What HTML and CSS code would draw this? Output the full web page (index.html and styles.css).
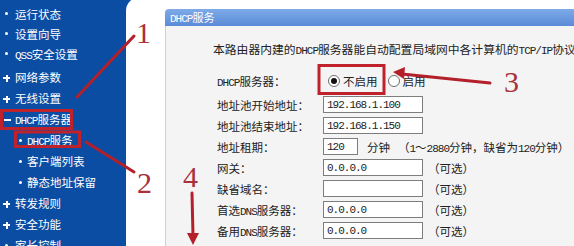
FILE: index.html
```html
<!DOCTYPE html>
<html lang="zh-CN">
<head>
    <meta charset="UTF-8">
    <title>DHCP服务</title>
    <link rel="stylesheet" href="styles.css">
</head>
<body>

    <div class="page">
        <!-- Menu kiri -->
        <nav class="sidebar">
            <ul class="menu">
                <li class="leaf">运行状态</li>
                <li class="leaf">设置向导</li>
                <li class="leaf"><span class="en">QSS</span>安全设置</li>
                <li class="plus group-start">网络参数</li>
                <li class="plus">无线设置</li>
                <li class="minus"><span class="en">DHCP</span>服务器</li>
                <li class="sub"><span class="en">DHCP</span>服务</li>
                <li class="sub">客户端列表</li>
                <li class="sub">静态地址保留</li>
                <li class="plus">转发规则</li>
                <li class="plus">安全功能</li>
                <li class="leaf">家长控制</li>
            </ul>
        </nav>

        <main class="main">
            <section class="panel">
                <div class="panel-head"><span class="en">DHCP</span>服务</div>
                <div class="panel-body">
                    <p class="intro">本路由器内建的<span class="en">DHCP</span>服务器能自动配置局域网中各计算机的<span class="en">TCP/IP</span>协议。</p>

                    <div class="form">
                        <div class="row row-radio">
                            <span class="label"><span class="en">DHCP</span>服务器：</span>
                            <span class="radio checked"></span><span class="radio-text">不启用</span>
                            <span class="radio radio-2"></span><span class="radio-text">启用</span>
                        </div>
                        <div class="row">
                            <span class="label">地址池开始地址：</span>
                            <input class="field" type="text" value="192.168.1.100" readonly>
                        </div>
                        <div class="row">
                            <span class="label">地址池结束地址：</span>
                            <input class="field" type="text" value="192.168.1.150" readonly>
                        </div>
                        <div class="row">
                            <span class="label">地址租期：</span>
                            <input class="field field-short" type="text" value="120" readonly>
                            <span class="unit">分钟</span>
                            <span class="hint">（<span class="en">1</span>～<span class="en">2880</span>分钟，缺省为<span class="en">120</span>分钟）</span>
                        </div>
                        <div class="row">
                            <span class="label">网关：</span>
                            <input class="field" type="text" value="0.0.0.0" readonly>
                            <span class="optional">（可选）</span>
                        </div>
                        <div class="row">
                            <span class="label">缺省域名：</span>
                            <input class="field" type="text" value="" readonly>
                            <span class="optional">（可选）</span>
                        </div>
                        <div class="row">
                            <span class="label">首选<span class="en">DNS</span>服务器：</span>
                            <input class="field" type="text" value="0.0.0.0" readonly>
                            <span class="optional">（可选）</span>
                        </div>
                        <div class="row">
                            <span class="label">备用<span class="en">DNS</span>服务器：</span>
                            <input class="field" type="text" value="0.0.0.0" readonly>
                            <span class="optional">（可选）</span>
                        </div>
                    </div>
                </div>
            </section>
        </main>
    </div>

    <!-- Tanda merah di atas screenshot -->
    <svg class="marks" width="574" height="246" viewBox="0 0 574 246">
        <g fill="none" stroke="#c0222b" stroke-width="3">
            <rect x="1.5" y="110.5" width="70" height="18"/>
            <rect x="15.5" y="132" width="64" height="14.5"/>
            <rect x="319" y="65.5" width="65" height="28"/>
        </g>
        <g stroke="#b3202a" stroke-width="3" stroke-linecap="round">
            <line x1="134" y1="36" x2="77" y2="97"/>
            <line x1="86" y1="142" x2="134" y2="172"/>
            <line x1="490" y1="83" x2="402" y2="74"/>
            <line x1="192" y1="193" x2="193" y2="236"/>
        </g>
        <g fill="#b3202a">
            <polygon points="393,72 405,67 404,79"/>
            <polygon points="193,245 187,233 199,233"/>
        </g>
        <g class="digit">
            <text x="136" y="43">1</text>
            <text x="137" y="193">2</text>
            <text x="504" y="92">3</text>
            <text x="183" y="187">4</text>
        </g>
    </svg>

</body>
</html>
```

FILE: styles.css
```css
body {
    margin: 0;
    width: 574px;
    height: 246px;
    overflow: hidden;
    position: relative;
    font-family: "Noto Sans CJK SC", sans-serif;
    font-size: 11.5px;
}

.en {
    font-family: "Liberation Mono", monospace;
    font-size: 11px;
    letter-spacing: -1px;
}

.page {
    display: flex;
    height: 246px;
    background-color: #0c4da4;
}

/* Menu kiri */
.sidebar {
    width: 126px;
    flex: none;
    color: #ffffff;
}

.menu {
    list-style: none;
    margin: 0;
    padding: 4px 0 0 0;
}

.menu li {
    position: relative;
    height: 21px;
    line-height: 21px;
    padding-left: 15px;
    white-space: nowrap;
}

.menu li.leaf:nth-child(-n+3) {
    height: 20px;
    line-height: 20px;
}

.menu li.group-start {
    margin-top: 3px;
}

.menu li::before {
    position: absolute;
    left: 5px;
    top: 9px;
    content: "";
    width: 3px;
    height: 3px;
    border-radius: 50%;
    background-color: #ffffff;
}

.menu li.leaf:nth-child(-n+3)::before {
    top: 8px;
}

.menu li.plus::before {
    left: 3px;
    top: 10px;
    width: 7px;
    height: 2px;
    border-radius: 0;
}

.menu li.plus::after {
    position: absolute;
    left: 5.5px;
    top: 7.5px;
    content: "";
    width: 2px;
    height: 7px;
    background-color: #ffffff;
}

.menu li.minus::before {
    left: 4px;
    top: 10px;
    width: 7px;
    height: 2px;
    border-radius: 0;
}

.menu li.sub {
    padding-left: 27px;
}

.menu li.sub::before {
    left: 19px;
}

/* Area kanan */
.main {
    flex: 1;
    display: flex;
    flex-direction: column;
    margin-top: -3px;
    padding: 12px 0 0 39px;
    background-color: #ffffff;
    border-top-left-radius: 14px;
}

.panel {
    flex: 1;
    display: flex;
    flex-direction: column;
    color: #222222;
}

.panel-head {
    height: 17px;
    line-height: 17px;
    padding-left: 5px;
    color: #ffffff;
    font-size: 11px;
    background: linear-gradient(#7eaae8, #5a8bd6);
    border-top-left-radius: 4px;
}

.panel-body {
    flex: 1;
    padding: 16px 0 0 47px;
    background-color: #f4f4f4;
    border-left: 1px solid #d8cfb8;
    overflow: hidden;
}

.intro {
    margin: 0;
    line-height: 14px;
    font-size: 11.8px;
    white-space: nowrap;
}

.form {
    margin-top: 9px;
    padding-left: 4px;
}

.row {
    display: flex;
    align-items: center;
    height: 21px;
    white-space: nowrap;
}

.row-radio {
    height: 27px;
}

.label {
    width: 106px;
    flex: none;
}

.radio {
    width: 10px;
    height: 10px;
    margin-left: 5px;
    margin-right: 3px;
    border: 1px solid #6d6d6d;
    border-radius: 50%;
    background-color: #ffffff;
    position: relative;
}

.radio.checked::after {
    content: "";
    position: absolute;
    left: 2px;
    top: 2px;
    width: 6px;
    height: 6px;
    border-radius: 50%;
    background-color: #111111;
}

.radio-2 {
    margin-left: 10px;
}

.field {
    width: 100px;
    height: 17px;
    box-sizing: border-box;
    margin: 0;
    padding: 0 0 0 3px;
    border: 1px solid #7d7d7d;
    background-color: #ffffff;
    color: #222222;
    font-family: "Liberation Mono", monospace;
    font-size: 11px;
    letter-spacing: -1px;
    outline: none;
}

.field-short {
    width: 35px;
}

.unit {
    margin-left: 9px;
}

.hint {
    margin-left: 8px;
}

.optional {
    margin-left: 5px;
}

/* Tanda merah */
.marks {
    position: absolute;
    left: 0;
    top: 0;
    pointer-events: none;
}

.digit {
    font-family: "Liberation Serif", serif;
    font-size: 30px;
    fill: #a8313b;
}
```
